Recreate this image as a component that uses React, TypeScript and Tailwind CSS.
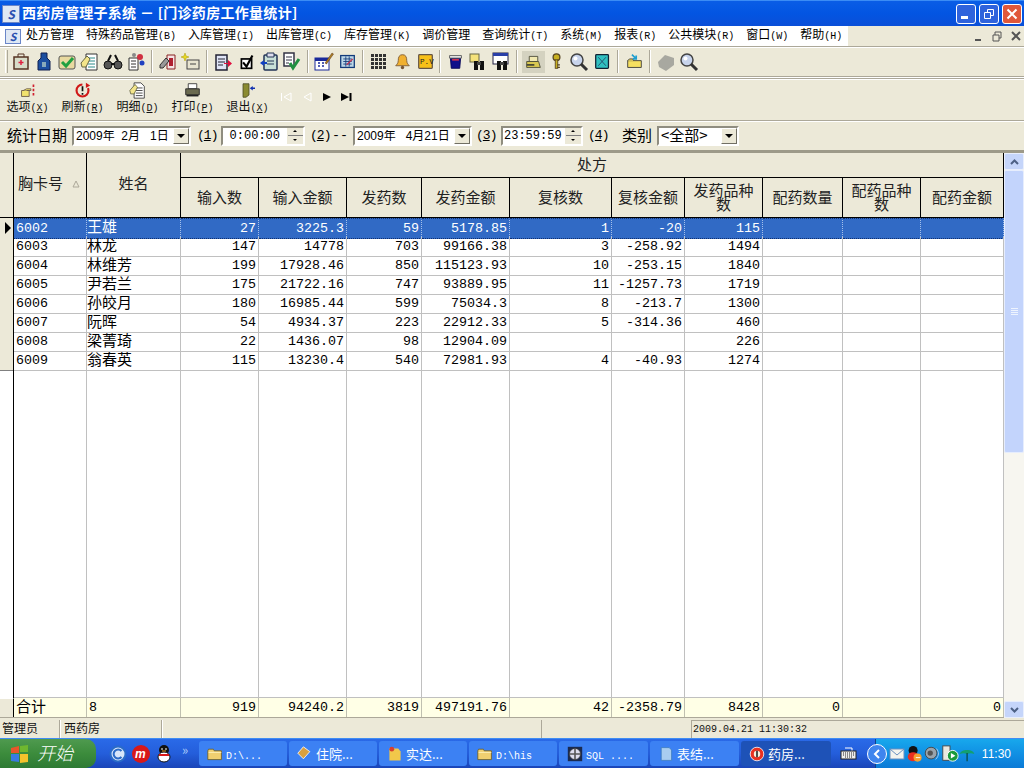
import React from 'react';

const CJK = "font-['Noto_Sans_CJK_SC','Noto_Sans',sans-serif]";
const MONO = "font-['Liberation_Mono','Noto_Sans_CJK_SC',monospace]";
const SANS = "font-['Liberation_Sans','Noto_Sans_CJK_SC',sans-serif]";
const COLS = 'grid-cols-[14px_73px_94px_78px_88px_75px_88px_102px_73px_78px_80px_78px_83px]';

type Row = { id: string; name: string; v: string[] };

const rows: Row[] = [
  { id: '6002', name: '王雄', v: ['27', '3225.3', '59', '5178.85', '1', '-20', '115', '', '', ''] },
  { id: '6003', name: '林龙', v: ['147', '14778', '703', '99166.38', '3', '-258.92', '1494', '', '', ''] },
  { id: '6004', name: '林维芳', v: ['199', '17928.46', '850', '115123.93', '10', '-253.15', '1840', '', '', ''] },
  { id: '6005', name: '尹若兰', v: ['175', '21722.16', '747', '93889.95', '11', '-1257.73', '1719', '', '', ''] },
  { id: '6006', name: '孙皎月', v: ['180', '16985.44', '599', '75034.3', '8', '-213.7', '1300', '', '', ''] },
  { id: '6007', name: '阮晖', v: ['54', '4934.37', '223', '22912.33', '5', '-314.36', '460', '', '', ''] },
  { id: '6008', name: '梁菁琦', v: ['22', '1436.07', '98', '12904.09', '', '', '226', '', '', ''] },
  { id: '6009', name: '翁春英', v: ['115', '13230.4', '540', '72981.93', '4', '-40.93', '1274', '', '', ''] },
];

const totals = ['919', '94240.2', '3819', '497191.76', '42', '-2358.79', '8428', '0', '', '0'];

const subHeaders = ['输入数', '输入金额', '发药数', '发药金额', '复核数', '复核金额', '发药品种数', '配药数量', '配药品种数', '配药金额'];

const menus: [string, string][] = [
  ['处方管理', ''],
  ['特殊药品管理', '(B)'],
  ['入库管理', '(I)'],
  ['出库管理', '(C)'],
  ['库存管理', '(K)'],
  ['调价管理', ''],
  ['查询统计', '(T)'],
  ['系统', '(M)'],
  ['报表', '(R)'],
  ['公共模块', '(R)'],
  ['窗口', '(W)'],
  ['帮助', '(H)'],
];

const Ico: React.FC<{ children: React.ReactNode; size?: number }> = ({ children, size = 20 }) => (
  <svg width={size} height={size} viewBox="0 0 20 20">{children}</svg>
);

const Magnifier = () => (
  <Ico>
    <circle cx="8" cy="8" r="6" fill="#c8d4ec" stroke="#444" strokeWidth="1.5" />
    <circle cx="6.5" cy="6.5" r="2" fill="#fff" />
    <path d="M12 12l6 6" stroke="#333" strokeWidth="3" />
  </Ico>
);

const Binoculars = ({ page }: { page?: boolean }) => (
  <Ico>
    {page ? <rect x="2" y="1" width="15" height="11" fill="#fff" stroke="#224" /> : <rect x="2" y="2" width="9" height="8" fill="#f5e27a" stroke="#664" />}
    {page && <rect x="2" y="1" width="15" height="3" fill="#2a3fa8" />}
    <rect x="6" y="9" width="4" height="9" fill="#111" />
    <rect x="12" y="9" width="4" height="9" fill="#111" />
    <rect x="9" y="10" width="4" height="3" fill="#444" />
  </Ico>
);

const toolIcons: React.ReactNode[][] = [
  [
    <Ico><rect x="3" y="5" width="14" height="12" fill="#d8dcc8" stroke="#532" strokeWidth="1.5" /><path d="M7 5V2h6v3" fill="none" stroke="#532" /><path d="M10 8v5M7.5 10.500h5" stroke="#e02040" strokeWidth="1.500" /></Ico>,
    <Ico><path d="M7 1h6v5l3 3v9H4V9l3-3z" fill="#1c4fa0" stroke="#102050" /><rect x="8" y="10" width="4" height="5" fill="#8ab" /></Ico>,
    <Ico><rect x="2" y="4" width="16" height="13" rx="2" fill="#e8d9a0" stroke="#555" /><path d="M5 10l4 4 7-8" fill="none" stroke="#20a040" strokeWidth="3" /></Ico>,
    <Ico><path d="M6 2h11v16H6z" fill="#fff" stroke="#333" /><path d="M8 6h7M8 9h7M8 12h7M8 15h7" stroke="#2a8a8a" /><path d="M1 11l6-7 3 3-4 8H2z" fill="#f3e58a" stroke="#664" /></Ico>,
    <Ico><circle cx="5" cy="13" r="4" fill="#555" stroke="#111" /><circle cx="15" cy="13" r="4" fill="#555" stroke="#111" /><path d="M5 9l3-6M15 9l-3-6M8 12h4" stroke="#111" strokeWidth="2" /></Ico>,
    <Ico><path d="M3 6h9v12H3z" fill="#fff" stroke="#333" /><path d="M5 9h5M5 12h5M5 15h5" stroke="#333" /><circle cx="14" cy="5" r="3" fill="#d03040" /><circle cx="16" cy="11" r="2.500" fill="#2040c0" /><circle cx="8" cy="3" r="2" fill="#888" /></Ico>,
  ],
  [
    <Ico><path d="M9 3h8v14H9z" fill="#f4e4e4" stroke="#822" /><path d="M11 6h4v8h-4z" fill="#b02030" /><path d="M2 13l6-7 3 3-6 7H2z" fill="#999" stroke="#333" /></Ico>,
    <Ico><rect x="6" y="8" width="12" height="9" fill="#e8e4d0" stroke="#444" /><path d="M9 12h6" stroke="#444" /><path d="M4 1l1 3 3 1-3 1-1 3-1-3-3-1 3-1z" fill="#e8d820" stroke="#a90" strokeWidth=".5" /></Ico>,
  ],
  [
    <Ico><path d="M3 3h11v15H3z" fill="#dfe4f6" stroke="#223" strokeWidth="1.500" /><path d="M5 7h7M5 10h7M5 13h5" stroke="#223" /><path d="M11 11h4V8l4 3.500-4 3.500v-3h-4z" fill="#e01040" /></Ico>,
    <Ico size={17}><rect x="4" y="7" width="12" height="11" fill="#fff" stroke="#000" strokeWidth="2" /><path d="M6 11l4 5 7-13" fill="none" stroke="#000" strokeWidth="2.500" /></Ico>,
    <Ico><rect x="5" y="3" width="13" height="15" rx="1" fill="#c8e0d8" stroke="#235" strokeWidth="1.500" /><path d="M8 1h7v4H8z" fill="#dde" stroke="#235" /><path d="M8 9h7M8 12h7" stroke="#235" /><path d="M1 11l4-3v6z" fill="#1040c0" /><path d="M4 10h4v2H4z" fill="#1040c0" /></Ico>,
    <Ico><path d="M2 1h10v13H2z" fill="#fff" stroke="#334" strokeWidth="1.500" /><path d="M4 5h6M4 8h6M4 11h3" stroke="#334" /><path d="M8 11l3 5 6-9" fill="none" stroke="#209040" strokeWidth="3" /></Ico>,
  ],
  [
    <Ico><rect x="1" y="6" width="14" height="12" fill="#fff" stroke="#1a2a9a" /><rect x="1" y="6" width="14" height="3" fill="#1a2a9a" /><path d="M4 11h2M8 11h2M12 11h1M4 14h2M8 14h2" stroke="#1a2a9a" strokeWidth="1.500" /><path d="M11 11l7-10 1.500 1-7 10z" fill="#b08020" stroke="#532" strokeWidth=".5" /></Ico>,
    <Ico size={17}><rect x="2" y="3" width="16" height="14" fill="#bcd6e6" stroke="#123a7a" strokeWidth="1.500" /><path d="M5 7h10M5 10h10M5 13h10M8 4v12M12 4v12" stroke="#123a7a" /><path d="M9 14l7-7" stroke="#c03050" strokeWidth="1.500" /></Ico>,
  ],
  [
    <Ico>{[2, 6, 10, 14].flatMap((y) => [2, 6, 10, 14].map((x) => <rect key={`${x}-${y}`} x={x} y={y} width="3" height="3" fill="#333" />))}</Ico>,
    <Ico size={17}><path d="M10 2c4 0 5 3 5 7 0 3 2 5 3 6H2c1-1 3-3 3-6 0-4 1-7 5-7z" fill="#f0b030" stroke="#753" /><circle cx="10" cy="17" r="2" fill="#753" /></Ico>,
    <Ico size={17}><rect x="2" y="2" width="16" height="16" rx="1" fill="#f8c018" stroke="#654" strokeWidth="1.500" /><text x="3.500" y="13" fontSize="9" fontFamily="Liberation Mono" fill="#222">P.V</text></Ico>,
  ],
  [
    <Ico size={17}><path d="M4 6h12l-1 12H5z" fill="#10108a" stroke="#005" /><path d="M3 3h14v3H3z" fill="#e8e8e8" stroke="#555" /><path d="M6 8h8" stroke="#d03050" strokeWidth="2" /></Ico>,
    <Binoculars />,
    <Binoculars page />,
  ],
  [
    <div className="w-[23px] h-[22px] bg-[#d4d2c0] flex items-center justify-center"><Ico size={17}><path d="M2 10h14l2 7H2z" fill="#d8c850" stroke="#443" /><path d="M5 4h10v6H5z" fill="#f0e8b0" stroke="#443" /><path d="M2 14h9" stroke="#443" strokeWidth="2" /></Ico></div>,
    <Ico size={17}><circle cx="10" cy="5" r="4" fill="#c8b020" stroke="#542" strokeWidth="1.500" /><rect x="8.500" y="8" width="3" height="10" fill="#c8b020" stroke="#542" /><path d="M11 14h3M11 17h3" stroke="#542" strokeWidth="1.500" /></Ico>,
    <Magnifier />,
    <Ico size={17}><rect x="2" y="2" width="15" height="16" rx="1" fill="#30c0c0" stroke="#123" strokeWidth="1.500" /><path d="M5 5l9 10M14 5l-9 10" stroke="#246" /></Ico>,
  ],
  [
    <Ico size={17}><path d="M2 9h16v8H2z" fill="#f6e060" stroke="#333" /><path d="M2 9l2-2h4l1 2" fill="#f6e060" stroke="#333" /><path d="M7 2l5 5M12 3v4H8" fill="none" stroke="#20a0d0" strokeWidth="2" /></Ico>,
  ],
  [
    <Ico><path d="M2 10l7-7 9 3v7l-8 6-7-4z" fill="#a8a8a0" /></Ico>,
    <Magnifier />,
  ],
];

const Sep: React.FC<{ className: string }> = ({ className }) => (
  <div className={`flex justify-center shrink-0 ${className}`}>
    <div className="w-[2px] h-[23px] border-l border-[#aca899] border-r border-r-white" />
  </div>
);

const Arrow = () => (
  <div className="w-0 h-0 border-x-[4px] border-x-transparent border-t-[4px] border-t-black" />
);

const ComboBtn = () => (
  <div className="w-[16px] h-[16px] bg-[#ece9d8] flex items-center justify-center border-r border-b border-[#716f64] border-t border-l border-t-white border-l-white shrink-0">
    <Arrow />
  </div>
);

const Sunken: React.FC<{ className: string; children: React.ReactNode }> = ({ className, children }) => (
  <div className={`h-[20px] bg-white flex items-center border-2 border-[#8f8d80] border-r-white border-b-white shrink-0 ${className}`}>
    {children}
  </div>
);

const Spin = () => (
  <div className="w-[17px] h-[16px] bg-[#ece9d8] flex flex-col items-center justify-center gap-[3px] shrink-0 border-l border-white">
    <div className="w-0 h-0 border-x-[2px] border-x-transparent border-b-[2px] border-b-black" />
    <div className="w-[15px] h-px bg-[#808080]" />
    <div className="w-0 h-0 border-x-[2px] border-x-transparent border-t-[2px] border-t-black" />
  </div>
);

const Circled: React.FC<{ n: string }> = ({ n }) => (
  <span className={`${MONO} text-[13px] tracking-[-1px] w-[20px] text-black shrink-0`}>(<span className="underline">{n}</span>)</span>
);

const DateText: React.FC<{ children: React.ReactNode }> = ({ children }) => (
  <span className={`${SANS} text-[12px] whitespace-pre grow pl-[2px] leading-none overflow-hidden`}>{children}</span>
);

const ToolBtn: React.FC<{ label: string; keyName: string; icon: React.ReactNode; className: string }> = ({ label, keyName, icon, className }) => (
  <div className={`flex flex-col items-center shrink-0 ${className}`}>
    <div className="h-[17px] flex items-center">{icon}</div>
    <div className="text-[12px] leading-[13px] whitespace-nowrap">
      {label}
      <span className={`${MONO} text-[10px]`}>(<span className="underline">{keyName}</span>)</span>
    </div>
  </div>
);

const WinBtn: React.FC<{ className: string; children: React.ReactNode }> = ({ className, children }) => (
  <div className={`w-[20px] h-[20px] rounded-[3px] border border-white flex items-center justify-center ${className}`}>
    {children}
  </div>
);

const TaskBtn: React.FC<{ icon: React.ReactNode; label: React.ReactNode; active?: boolean; w: string }> = ({ icon, label, active, w }) => (
  <div className={`h-[25px] rounded-[3px] flex items-center gap-[3px] pl-[8px] text-white text-[13px] shrink-0 ${w} ${active ? 'bg-[#1e52b7]' : 'bg-[#3c81f3]'}`}>
    {icon}
    <span className="whitespace-pre">{label}</span>
  </div>
);

const Folder = () => (
  <Ico size={16}>
    <path d="M1 6l1-2h6l1 2h9v11H1z" fill="#f0cf70" stroke="#6b5a20" />
    <path d="M2 8h16" stroke="#fff6c8" />
  </Ico>
);

const Tick = () => <div className="border-r border-b border-[#c0c0c0]" />;

const App: React.FC = () => {
  return (
    <div className={`w-[1024px] h-[768px] overflow-hidden flex flex-col bg-[#ece9d8] text-black ${CJK}`}>
      {/* title bar */}
      <div className="h-[26px] shrink-0 flex items-center bg-gradient-to-b from-[#0a5de6] via-[#0355e2] to-[#0a4fd8] border-t border-[#3b8cf5]">
        <div className="w-[18px] h-[18px] ml-[2px] bg-[#dfe8f4] border border-[#6a86c8] flex items-center justify-center">
          <span className="text-[12px] font-bold leading-none italic text-[#2a50b0]">S</span>
        </div>
        <div className="ml-[2px] text-white text-[14px] font-bold whitespace-pre tracking-[0.3px] pb-[2px]">西药房管理子系统 － [门诊药房工作量统计]</div>
        <div className="ml-auto flex gap-[3px] pr-[2px]">
          <WinBtn className="bg-[#2f63dc]"><div className="w-[7px] h-[3px] bg-white mt-[8px] mr-[3px]" /></WinBtn>
          <WinBtn className="bg-[#2f63dc]">
            <svg width="12" height="12" viewBox="0 0 12 12" fill="none" stroke="#fff"><path d="M1.500 4.500h6v6h-6zM4.500 4V1.500h6v6H8" /></svg>
          </WinBtn>
          <WinBtn className="bg-[#e0583a]">
            <svg width="12" height="12" viewBox="0 0 12 12" stroke="#fff" strokeWidth="2"><path d="M1.500 1.500l9 9M10.500 1.500l-9 9" /></svg>
          </WinBtn>
        </div>
      </div>

      {/* menu bar */}
      <div className="h-[20px] shrink-0 flex bg-[#ece9d8]">
        <div className="w-[848px] bg-white flex items-center shrink-0">
          <div className="w-[26px] flex justify-center shrink-0">
            <div className="w-[16px] h-[15px] bg-[#dfe8f4] border border-[#6a86c8] flex items-center justify-center">
              <span className="text-[11px] font-bold italic leading-none text-[#2a50b0]">S</span>
            </div>
          </div>
          {menus.map(([label, hotkey]) => (
            <div key={label} className="pr-[12px] pb-[3px] text-[12px] leading-none whitespace-nowrap shrink-0">
              {label}<span className={`${MONO} text-[10px]`}>{hotkey}</span>
            </div>
          ))}
        </div>
        <div className="ml-auto flex items-center gap-[5px] pr-[1px] text-[#555]">
          <div className="w-[14px] h-[14px] flex items-end justify-center pb-[2px]"><div className="w-[6px] h-[2px] bg-[#555]" /></div>
          <svg width="14" height="14" viewBox="0 0 14 14" fill="none" stroke="#555"><path d="M3 6h6v6H3zM5 6V3h6v6H9" /></svg>
          <svg width="14" height="14" viewBox="0 0 14 14" stroke="#555" strokeWidth="2"><path d="M3 3l8 8M11 3l-8 8" /></svg>
        </div>
      </div>

      {/* icon toolbar */}
      <div className="h-[31px] shrink-0 flex items-center border-y border-t-[#aca899] border-b-[#aca899] shadow-[inset_0_1px_0_#fff,0_1px_0_#fff]">
        <div className="w-[3px] h-[23px] ml-[5px] mr-[1.500px] border-l border-white border-r border-r-[#aca899] shrink-0" />
        {toolIcons.map((group, i) => (
          <React.Fragment key={i}>
            {i > 0 && <Sep className={i === 5 ? 'w-[7px]' : 'w-[9px]'} />}
            {group.map((icon, j) => (
              <div key={j} className="w-[23px] h-[24px] flex items-center justify-center shrink-0">{icon}</div>
            ))}
          </React.Fragment>
        ))}
      </div>

      {/* action toolbar */}
      <div className="h-[42px] mt-px shrink-0 flex items-start pt-[3px] border-t border-[#aca899] shadow-[inset_0_1px_0_#fff] text-[#111]">
        <ToolBtn className="w-[55px]" label="选项" keyName="X" icon={<Ico size={17}><path d="M3 10h9v7H3z" fill="#f2e26e" stroke="#654" /><path d="M5 10l4-2h5v2H9" fill="#f2e26e" stroke="#654" /><path d="M17 3v14" stroke="#d02030" strokeWidth="2" strokeDasharray="3 2" /></Ico>} />
        <ToolBtn className="w-[55px]" label="刷新" keyName="R" icon={<Ico size={17}><circle cx="10" cy="10" r="7" fill="none" stroke="#d01818" strokeWidth="2.500" strokeDasharray="32 8" /><path d="M10 5v6M10 13v2" stroke="#111" strokeWidth="2" /><path d="M14 1l5 3-5 3z" fill="#d01818" /></Ico>} />
        <ToolBtn className="w-[55px]" label="明细" keyName="D" icon={<Ico size={17}><path d="M6 1h8l4 4v14H6z" fill="#fff" stroke="#333" /><path d="M8 7h8M8 10h8M8 13h8M8 16h8" stroke="#333" /><path d="M1 10l6-7 3 3-4 8H2z" fill="#f3e58a" stroke="#664" /></Ico>} />
        <ToolBtn className="w-[55px]" label="打印" keyName="P" icon={<Ico size={17}><path d="M5 2h10v6H5z" fill="#fff" stroke="#333" /><path d="M2 8h16v7H2z" fill="#6a6a50" stroke="#222" /><path d="M3 15h14v2H3z" fill="#222" /></Ico>} />
        <ToolBtn className="w-[55px]" label="退出" keyName="X" icon={<Ico size={15}><path d="M4 1h8v15l-4 3H4z" fill="#8a8a30" stroke="#442" /><path d="M13 7l4-3v2h3v2h-3v2z" fill="#1030b0" /></Ico>} />
        <div className="flex items-center gap-[7px] ml-[5px] mt-[10px]">
          <svg width="13" height="10" viewBox="0 0 13 10" fill="none" stroke="#fff"><path d="M1.500 1v8M11 1L4 5l7 4z" /></svg>
          <svg width="13" height="10" viewBox="0 0 13 10" fill="none" stroke="#fff"><path d="M11 1L4 5l7 4z" /></svg>
          <svg width="13" height="10" viewBox="0 0 13 10" fill="#000"><path d="M3 1l8 4-8 4z" /></svg>
          <svg width="13" height="10" viewBox="0 0 13 10" fill="#000"><path d="M1 1l8 4-8 4zM9.500 1h2v8h-2z" /></svg>
        </div>
      </div>

      {/* filter row */}
      <div className="h-[30px] shrink-0 flex items-center pl-[7px] border-t border-[#aca899] shadow-[inset_0_1px_0_#fff] text-[15px] leading-none">
        <span className="w-[65px] shrink-0 whitespace-nowrap pb-[3px]">统计日期</span>
        <Sunken className="w-[119px]"><DateText>2009年  2月   1日</DateText><ComboBtn /></Sunken>
        <span className="w-[6px] shrink-0" />
        <Circled n="1" />
        <Sunken className="w-[84px] ml-[4px]"><span className={`${MONO} text-[12px] grow text-right pr-[6px]`}>0:00:00</span><Spin /></Sunken>
        <span className="w-[5px] shrink-0" />
        <Circled n="2" />
        <span className={`${MONO} text-[13.33px] w-[23px] pl-[2px] shrink-0`}>--</span>
        <Sunken className="w-[119px]"><DateText>2009年   4月21日</DateText><ComboBtn /></Sunken>
        <span className="w-[4px] shrink-0" />
        <Circled n="3" />
        <Sunken className="w-[82px] ml-[5px]"><span className={`${MONO} text-[12px] grow pl-[1px]`}>23:59:59</span><Spin /></Sunken>
        <span className="w-[5px] shrink-0" />
        <Circled n="4" />
        <span className="ml-[14px] w-[35px] shrink-0 pb-[3px]">类别</span>
        <Sunken className="w-[82px]"><span className="grow pl-[2px] pb-[3px] whitespace-nowrap">&lt;全部&gt;</span><ComboBtn /></Sunken>
      </div>

      {/* data grid */}
      <div className="h-[568px] shrink-0 flex border-t-[3px] border-[#9d9a89] bg-white">
        <div className="w-[1004px] flex flex-col shrink-0">
          <div className={`grid ${COLS} grid-rows-[25px_40px] h-[65px] bg-[#ece9d8] text-[15px] text-[#222] shrink-0`}>
            <div className="row-span-2 border-r border-b border-black" />
            <div className="row-span-2 border-r border-b border-black flex items-center pl-[4px] gap-[9px] pb-[3px]">
              胸卡号
              <svg width="8" height="8" viewBox="0 0 8 8" fill="none" stroke="#aca899"><path d="M4 1L1 7h6z" /></svg>
            </div>
            <div className="row-span-2 border-r border-b border-black flex items-center justify-center pb-[3px]">姓名</div>
            <div className="col-span-10 border-r border-b border-black flex items-center justify-center pb-[2px]">处方</div>
            {subHeaders.map((h) => (
              <div key={h} className="border-r border-b border-black flex items-center justify-center text-center leading-[14px] px-[5px] pb-[2px]">{h}</div>
            ))}
          </div>

          {rows.map((r, i) => {
            const sel = i === 0;
            const cell = sel ? 'border-r border-[#a5c0ea] border-y border-y-[#0f2f70] border-dotted bg-[#316ac5] text-white' : 'border-r border-b border-[#c0c0c0]';
            return (
              <div key={r.id} className={`grid ${COLS} h-[19px] shrink-0 ${MONO} text-[13.33px] leading-[19px]`}>
                <div className="bg-[#ece9d8] border-r border-b border-r-black border-b-[#808080] flex items-center">
                  {sel && <div className="ml-[5px] w-0 h-0 border-y-[6px] border-y-transparent border-l-[6px] border-l-black" />}
                </div>
                <div className={`${cell} pl-[2px]`}>{r.id}</div>
                <div className={`${cell} ${CJK} text-[15px] ${sel ? 'leading-[14px]' : 'leading-[16px]'}`}>{r.name}</div>
                {r.v.map((v, j) => (
                  <div key={j} className={`${cell} text-right pr-[2px]`}>{v}</div>
                ))}
              </div>
            );
          })}

          <div className={`grid ${COLS} grow`}>
            <div className="border-r border-black" />
            {Array.from({ length: 12 }).map((_, i) => <Tick key={i} />)}
          </div>

          <div className={`grid ${COLS} h-[20px] shrink-0 bg-[#ffffe6] ${MONO} text-[13.33px] leading-[19px] border-b border-[#aca899]`}>
            <div className="bg-[#ece9d8] border-r border-black border-t border-t-white" />
            <div className={`border-r border-[#c0c0b0] pl-[2px] ${CJK} text-[15px] leading-[16px]`}>合计</div>
            <div className="border-r border-[#c0c0b0] pl-[2px]">8</div>
            {totals.map((v, j) => (
              <div key={j} className="border-r border-[#c0c0b0] text-right pr-[2px]">{v}</div>
            ))}
          </div>
        </div>

        {/* scrollbar */}
        <div className="w-[20px] flex flex-col bg-[#f7f6f0] shrink-0">
          <div className="h-[17px] bg-[#c5d5fa] border border-[#e8eefc] rounded-[2px] flex items-center justify-center shrink-0">
            <svg width="9" height="6" viewBox="0 0 9 6" fill="none" stroke="#4d6185" strokeWidth="2"><path d="M1 5l3.500-3.500L8 5" /></svg>
          </div>
          <div className="h-[283px] bg-[#c3d4fc] border border-[#e6edfd] rounded-[2px] flex flex-col items-center justify-center gap-px shrink-0">
            {[0, 1, 2, 3].map((k) => <div key={k} className="w-[7px] h-px bg-[#eef4fe]" />)}
          </div>
          <div className="grow" />
          <div className="h-[17px] bg-[#c5d5fa] border border-[#e8eefc] rounded-[2px] flex items-center justify-center shrink-0">
            <svg width="9" height="6" viewBox="0 0 9 6" fill="none" stroke="#4d6185" strokeWidth="2"><path d="M1 1l3.500 3.500L8 1" /></svg>
          </div>
        </div>
      </div>

      {/* status bar */}
      <div className="h-[20px] shrink-0 flex items-end text-[12px] text-[#111]">
        <div className="w-[60px] pl-[2px] h-[18px] border-r border-[#aca899] leading-[15px]">管理员</div>
        <div className="w-[102px] pl-[3px] h-[18px] border-x border-white border-r-[#aca899] leading-[15px]">西药房</div>
        <div className="w-[380px] h-[18px] border-x border-[#aca899] border-l-white" />
        <div className="w-[150px] h-[18px] border-r border-[#aca899]" />
        <div className={`pl-[1px] ${MONO} text-[10px] whitespace-pre border-t border-[#aca899] h-[18px] grow leading-[17px]`}>2009.04.21 11:30:32</div>
      </div>

      {/* taskbar */}
      <div className="h-[30px] shrink-0 flex items-center bg-gradient-to-b from-[#2a6ae8] via-[#245edb] to-[#1a45b8] border-t border-[#3f8cf3]">
        <div className="w-[96px] h-[29px] rounded-r-[10px] bg-gradient-to-b from-[#4f9a4f] via-[#3c8c3c] to-[#2e7a34] flex items-center pl-[10px] gap-[7px] shrink-0">
          <svg width="20" height="18" viewBox="0 0 20 18">
            <path d="M1 3l8-2v7H1z" fill="#e8562a" />
            <path d="M10 1l8-1v7h-8z" fill="#6fb72f" />
            <path d="M1 9h8v8l-8-1z" fill="#3a7be0" />
            <path d="M10 9h8v8l-8 1z" fill="#f5c32c" />
          </svg>
          <span className="text-white text-[18px] italic font-light leading-none pb-[3px]">开始</span>
        </div>
        <div className="flex items-center gap-[3px] ml-[12px] w-[66px] shrink-0">
          <Ico><circle cx="10" cy="10" r="7.500" fill="#d8e6fa" stroke="#2a6bc8" strokeWidth="2" /><path d="M13.500 7a4.500 4.500 0 1 0 0 6" fill="none" stroke="#2a6bc8" strokeWidth="2" /></Ico>
          <Ico><circle cx="10" cy="10" r="9" fill="#d81818" /><text x="4" y="14" fontSize="12" fontStyle="italic" fontWeight="bold" fill="#fff" fontFamily="Liberation Sans">m</text></Ico>
          <Ico><ellipse cx="10" cy="6" rx="5" ry="5" fill="#111" /><ellipse cx="10" cy="13" rx="6" ry="5" fill="#fff" stroke="#111" /><path d="M5 11h10" stroke="#d81818" strokeWidth="2" /><path d="M7 5h2M11 5h2" stroke="#fff" /><path d="M8 7h4" stroke="#f0a020" /></Ico>
        </div>
        <span className="text-[#a8c8f8] text-[13px] w-[25px] shrink-0 pl-[8px] mt-[-8px] leading-none">»</span>
        <div className="flex items-center gap-[2px]">
          <TaskBtn w="w-[88px]" icon={<Folder />} label={<span className={`${MONO} text-[10px]`}>{'D:\\...'}</span>} />
          <TaskBtn w="w-[88px]" icon={<Ico size={16}><path d="M8 1l8 6-8 9-7-7z" fill="#d8a040" stroke="#fff" /></Ico>} label="住院..." />
          <TaskBtn w="w-[88px]" icon={<Ico size={16}><path d="M3 3h11l3 4v11H3z" fill="#f2c84a" /><circle cx="6" cy="4" r="3" fill="#d84030" /></Ico>} label="实达..." />
          <TaskBtn w="w-[88px]" icon={<Folder />} label={<span className={`${MONO} text-[10px]`}>{'D:\\his'}</span>} />
          <TaskBtn w="w-[89px]" icon={<Ico size={16}><rect x="1" y="1" width="18" height="18" fill="#1a2a50" /><circle cx="10" cy="10" r="7" fill="#dde" stroke="#333" /><path d="M3 10h14M10 3v14" stroke="#555" strokeWidth="2" /></Ico>} label={<span className={`${MONO} text-[10px]`}>SQL ....</span>} />
          <TaskBtn w="w-[89px]" icon={<Ico size={16}><path d="M4 2h10l3 3v13H4z" fill="#a8cdf0" stroke="#3a7ac0" /></Ico>} label="表结..." />
          <TaskBtn active w="w-[90px]" icon={<Ico size={16}><circle cx="10" cy="10" r="8.500" fill="#e83020" stroke="#fff" /><circle cx="10" cy="10" r="4" fill="#f4f0e0" /><path d="M10 6v8" stroke="#222" strokeWidth="2" /></Ico>} label="药房..." />
        </div>
        <div className="w-[44px] flex justify-center pr-[10px] shrink-0">
          <svg width="17" height="13" viewBox="0 0 17 13"><path d="M5 1h7v3" fill="none" stroke="#fff" /><rect x="1" y="4" width="15" height="8" fill="#eee" stroke="#222" /><path d="M3 6h11M3 8h11M5 10h7" stroke="#222" strokeDasharray="1 1" /></svg>
        </div>
        <div className="grow self-stretch flex items-center bg-gradient-to-b from-[#18a8ec] via-[#1190e4] to-[#0c7ad6] border-l border-[#10408c] relative">
          <div className="w-[20px] h-[20px] rounded-full ml-[-9px] bg-[#3f85ee] border border-white flex items-center justify-center shrink-0">
            <svg width="8" height="10" viewBox="0 0 8 10" fill="none" stroke="#fff" strokeWidth="2"><path d="M6 1L2 5l4 4" /></svg>
          </div>
          <div className="flex items-center ml-[2px]">
            <svg width="16" height="16" viewBox="0 0 16 16"><rect x="1" y="3" width="14" height="10" fill="#f4f4ee" stroke="#6a90c0" /><path d="M1 3l7 6 7-6" fill="none" stroke="#6a90c0" /></svg>
            <Ico size={18}><ellipse cx="9" cy="6" rx="5" ry="5" fill="#111" /><ellipse cx="9" cy="13" rx="6" ry="5" fill="#e83020" /><circle cx="14" cy="14" r="4.500" fill="#f5a030" /><path d="M12 14h5" stroke="#fff" /></Ico>
            <Ico size={18}><circle cx="9" cy="9" r="6.500" fill="#9aa4ac" stroke="#444" /><circle cx="8" cy="9" r="3" fill="#555" /><path d="M15 4c3 4 3 8-1 12" fill="none" stroke="#b8d0f0" /></Ico>
            <Ico size={18}><rect x="2" y="1" width="8" height="16" fill="#e8e8e0" stroke="#444" /><circle cx="13" cy="12" r="6" fill="#1a9a3a" stroke="#fff" /><path d="M11 9l5 3-5 3z" fill="#fff" /></Ico>
            <Ico size={18}><path d="M1 10c1-6 15-6 16 0-3-1-5-1-8 0-3-1-5-1-8 0z" fill="#12a070" /><path d="M9 9v9" stroke="#0a5050" strokeWidth="1.500" /></Ico>
          </div>
          <span className={`absolute right-[13px] text-white ${SANS} text-[12px] leading-none`}>11:30</span>
        </div>
      </div>
    </div>
  );
};

export default App;
